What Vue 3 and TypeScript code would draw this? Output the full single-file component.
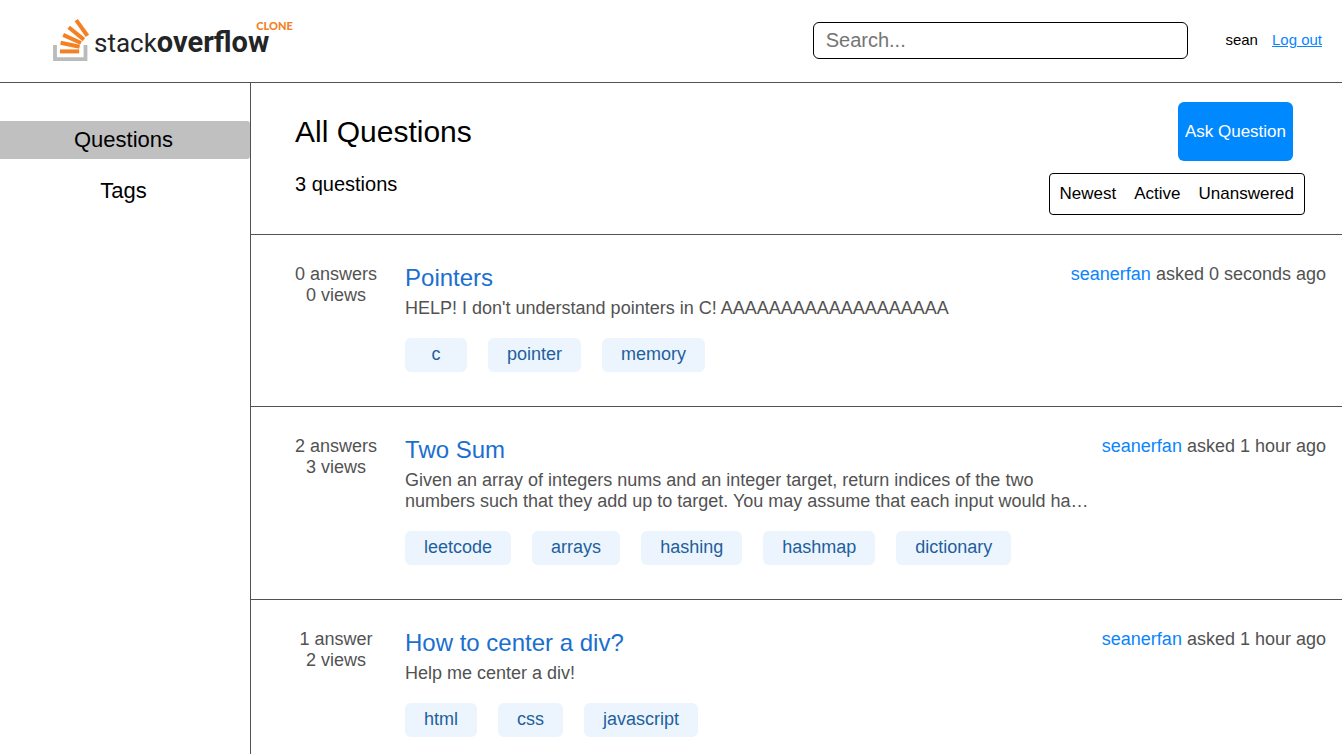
<script setup lang="ts">
import { ref } from 'vue'

interface Question {
  id: number
  title: string
  text: string
  answers: number
  views: number
  author: string
  asked: string
  tags: string[]
}

const search = ref('')
const filters: string[] = ['Newest', 'Active', 'Unanswered']

const questions: Question[] = [
  {
    id: 1,
    title: 'Pointers',
    text: "HELP! I don't understand pointers in C! AAAAAAAAAAAAAAAAAAA",
    answers: 0,
    views: 0,
    author: 'seanerfan',
    asked: '0 seconds ago',
    tags: ['c', 'pointer', 'memory'],
  },
  {
    id: 2,
    title: 'Two Sum',
    text: 'Given an array of integers nums and an integer target, return indices of the two numbers such that they add up to target. You may assume that each input would have exactly one solution.',
    answers: 2,
    views: 3,
    author: 'seanerfan',
    asked: '1 hour ago',
    tags: ['leetcode', 'arrays', 'hashing', 'hashmap', 'dictionary'],
  },
  {
    id: 3,
    title: 'How to center a div?',
    text: 'Help me center a div!',
    answers: 1,
    views: 2,
    author: 'seanerfan',
    asked: '1 hour ago',
    tags: ['html', 'css', 'javascript'],
  },
]

const plural = (n: number, word: string): string => `${n} ${word}${n === 1 ? '' : 's'}`
</script>

<template>
  <div class="page">
    <header class="topbar">
      <a class="logo" href="#">
        <svg class="mark" width="36" height="44" viewBox="0 0 36 44" fill="none" aria-hidden="true">
          <path d="M2 27V41.2H32.5V27" stroke="#bcbbbb" stroke-width="3.8" />
          <g stroke="#f48024" stroke-width="4">
            <path d="M7 33.4H26.2" />
            <path d="M7.6 24.8L26.6 28.8" />
            <path d="M10.2 16.9L28 25" />
            <path d="M15.7 9.3L30.9 21.6" />
            <path d="M23.2 2.2L34.4 17.8" />
          </g>
        </svg>
        <span class="wordmark">stack<b>overflow</b></span>
        <span class="clone">CLONE</span>
      </a>
      <input v-model="search" class="search" type="search" placeholder="Search..." aria-label="Search" />
      <div class="account">
        <span>sean</span>
        <a class="logout" href="#">Log out</a>
      </div>
    </header>

    <div class="body">
      <nav class="sidebar">
        <button class="nav-item active" type="button">Questions</button>
        <button class="nav-item" type="button">Tags</button>
      </nav>

      <main class="main">
        <section class="heading">
          <div class="heading-row">
            <h1>All Questions</h1>
            <button class="ask" type="button">Ask Question</button>
          </div>
          <div class="heading-row sub">
            <p class="count">{{ questions.length }} questions</p>
            <div class="filters">
              <button v-for="f in filters" :key="f" type="button">{{ f }}</button>
            </div>
          </div>
        </section>

        <article v-for="q in questions" :key="q.id" class="question">
          <div class="stats">
            <div>{{ plural(q.answers, 'answer') }}</div>
            <div>{{ plural(q.views, 'view') }}</div>
          </div>
          <div class="content">
            <div class="title-row">
              <a class="title" href="#">{{ q.title }}</a>
              <div class="meta"><span class="author">{{ q.author }}</span> asked {{ q.asked }}</div>
            </div>
            <p class="text">{{ q.text }}</p>
            <div class="tags">
              <button v-for="t in q.tags" :key="t" class="tag" type="button">{{ t }}</button>
            </div>
          </div>
        </article>
      </main>
    </div>
  </div>
</template>

<style>
body {
  margin: 0;
  background: #fff;
}
</style>

<style scoped>
.page {
  display: flex;
  flex-direction: column;
  min-height: 100vh;
  font-family: "Liberation Sans", Arial, sans-serif;
  color: #000;
}

button,
input {
  box-sizing: border-box;
  margin: 0;
  padding: 0;
  border: none;
  background: none;
  font: inherit;
  color: inherit;
}

button {
  cursor: pointer;
}

h1,
p {
  margin: 0;
  font-weight: 400;
}

.topbar {
  display: flex;
  align-items: center;
  height: 80px;
  padding: 0 20px 2px 53px;
  border-bottom: 1px solid #525252;
}

.logo {
  display: flex;
  align-items: flex-start;
  margin-right: auto;
  color: #222426;
  text-decoration: none;
}

.mark {
  margin: 5px 5px 0 0;
}

.wordmark {
  margin-top: 4px;
  font-family: Roboto, "Liberation Sans", sans-serif;
  font-size: 26px;
  line-height: 50px;
}

.wordmark b {
  font-size: 29px;
}

.clone {
  margin: 5px 0 0 -13px;
  font-family: Lato, sans-serif;
  font-size: 11px;
  font-weight: 900;
  line-height: 16px;
  color: #f48024;
}

.search {
  flex-shrink: 0;
  width: 28vw;
  height: 37px;
  padding: 0 12px;
  border: 1px solid #000;
  border-radius: 6px;
  font-size: 20px;
  appearance: none;
}

.search::placeholder {
  color: #757575;
}

.account {
  display: flex;
  flex-shrink: 0;
  gap: 14px;
  margin-left: 37px;
  font-size: 15px;
  line-height: 18px;
}

.logout {
  color: #0a84ff;
}

.body {
  display: flex;
  flex: 1;
}

.sidebar {
  display: flex;
  flex: 0 0 250px;
  flex-direction: column;
  gap: 13px;
  padding-top: 38px;
  border-right: 1px solid #525252;
}

.nav-item {
  height: 38px;
  padding-right: 3px;
  border-radius: 0 3px 3px 0;
  font-size: 22px;
}

.nav-item.active {
  background: #c0c0c0;
}

.main {
  flex: 1;
  min-width: 0;
}

.heading {
  padding: 19px 37px 19px 44px;
  border-bottom: 1px solid #525252;
}

.heading-row {
  display: flex;
  align-items: center;
  justify-content: space-between;
}

.heading-row.sub {
  align-items: flex-start;
  margin-top: 12px;
}

h1 {
  font-size: 30px;
  line-height: 36px;
}

.ask {
  height: 59px;
  margin-right: 12px;
  padding: 0 7px;
  border-radius: 6px;
  background: #08f;
  color: #fff;
  font-size: 17px;
}

.count {
  font-size: 20px;
  line-height: 22px;
}

.filters {
  display: flex;
  gap: 18px;
  align-items: center;
  box-sizing: border-box;
  height: 42px;
  padding: 0 10px;
  border: 1px solid #000;
  border-radius: 4px;
  font-size: 17px;
}

.question {
  display: flex;
  padding: 29px 16px 34px 44px;
  border-bottom: 1px solid #525252;
  font-size: 18px;
  line-height: 21px;
  color: #525252;
}

.stats {
  flex: 0 0 82px;
  margin-right: 28px;
  text-align: center;
  white-space: nowrap;
}

.content {
  flex: 1;
  min-width: 0;
}

.title-row {
  display: flex;
  align-items: flex-start;
  justify-content: space-between;
}

.title {
  color: #1a6fd0;
  font-size: 24px;
  line-height: 28px;
  text-decoration: none;
}

.author {
  color: #0a84ff;
}

.text {
  display: -webkit-box;
  overflow: hidden;
  width: 75%;
  margin-top: 6px;
  -webkit-box-orient: vertical;
  -webkit-line-clamp: 2;
}

.tags {
  display: flex;
  flex-wrap: wrap;
  gap: 21px;
  margin-top: 19px;
}

.tag {
  min-width: 62px;
  height: 34px;
  padding: 0 19px 2px;
  border-radius: 6px;
  background: #ecf5fd;
  color: #1f5f9e;
}
</style>
